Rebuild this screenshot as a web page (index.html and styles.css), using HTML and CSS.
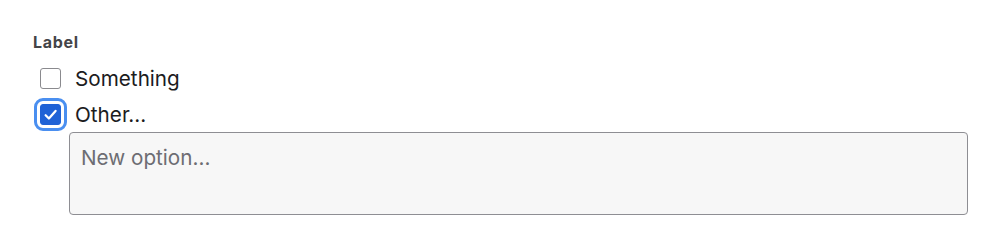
FILE: index.html
```html
<!DOCTYPE html>
<html lang="en">
<head>
    <meta charset="UTF-8">
    <meta name="viewport" content="width=device-width, initial-scale=1.0">
    <title>Checkbox group</title>
    <link rel="stylesheet" href="styles.css">
</head>
<body>

<div class="field">
    <div class="field-label">Label</div>

    <label class="option">
        <input type="checkbox" class="check">
        <span>Something</span>
    </label>

    <label class="option">
        <input type="checkbox" class="check is-focused" checked>
        <span>Other...</span>
    </label>

    <textarea class="other-input" placeholder="New option..."></textarea>
</div>

</body>
</html>
```

FILE: styles.css
```css
body {
    margin: 0;
    font-family: "Inter", "Noto Sans", sans-serif;
    color: #1c1c1e;
    background: #fff;
}
.field {
    padding: 32px 31px 0 33px;
}
.field-label {
    font-size: 16px;
    font-weight: 700;
    letter-spacing: 0.7px;
    line-height: 20px;
    color: #444448;
    margin-bottom: 8px;
}
.option {
    display: flex;
    align-items: center;
    gap: 14px;
    height: 36px;
    padding-left: 7px;
    font-size: 20.7px;
    cursor: pointer;
}
.check {
    appearance: none;
    -webkit-appearance: none;
    margin: 0;
    width: 21px;
    height: 21px;
    border: 1.5px solid #8a8a8e;
    border-radius: 3px;
    background: #fff;
    flex-shrink: 0;
}
.check:checked {
    border-color: #1f62d6;
    background: #1f62d6 url("data:image/svg+xml,%3Csvg xmlns='http://www.w3.org/2000/svg' viewBox='0 0 20 20'%3E%3Cpath d='M5 10.5l3.2 3.2 6.5-7.4' fill='none' stroke='white' stroke-width='2.2' stroke-linecap='round' stroke-linejoin='round'/%3E%3C/svg%3E") center / 20px no-repeat;
}
.check.is-focused {
    outline: 3px solid #4a8ff0;
    outline-offset: 3px;
    border-radius: 3px;
}
.other-input {
    display: block;
    box-sizing: border-box;
    width: calc(100% - 36px);
    height: 83px;
    margin-left: 36px;
    padding: 11px 11px;
    font-family: inherit;
    font-size: 20.7px;
    line-height: 27px;
    color: #1c1c1e;
    background: #f7f7f7;
    border: 1px solid #8e8e93;
    border-radius: 4px;
    resize: none;
}
.other-input::placeholder {
    color: #6d6d73;
}
```
